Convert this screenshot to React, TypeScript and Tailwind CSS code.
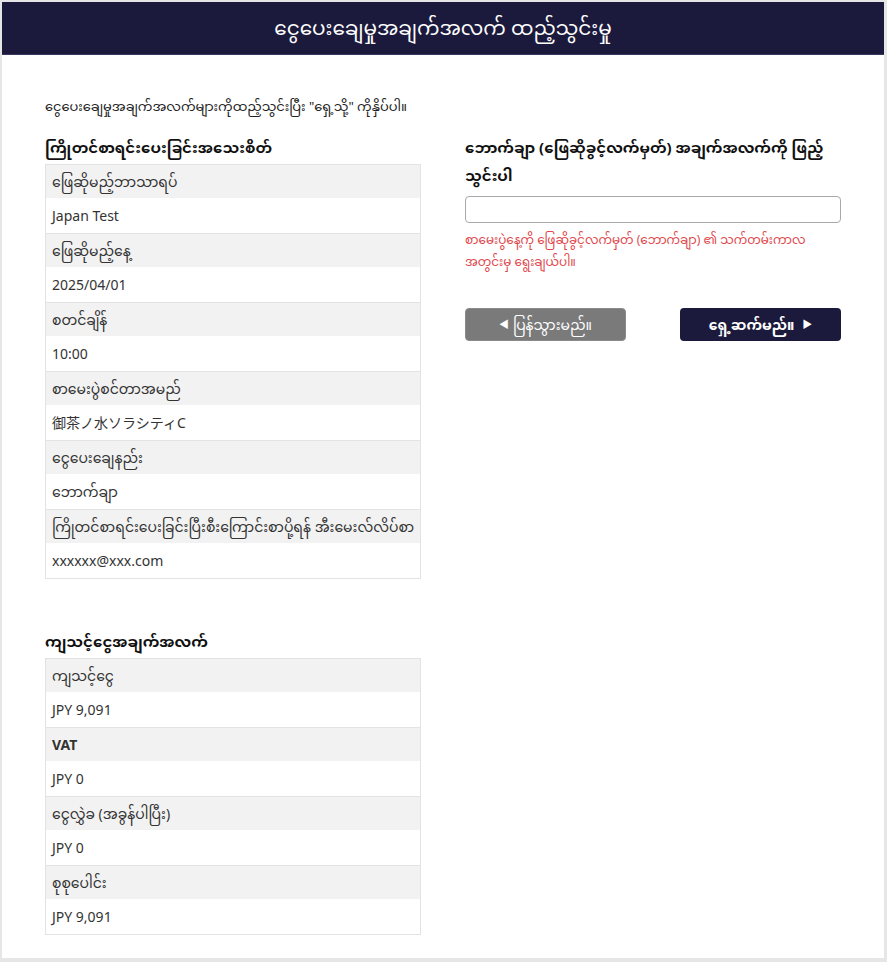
import React from 'react';

const font = { fontFamily: '"Noto Sans", "Noto Sans Myanmar", "Open Sans", "Noto Sans CJK JP", sans-serif' };

type Row = { label: string; value: string; boldLabel?: boolean };

const reservation: Row[] = [
  { label: 'ဖြေဆိုမည့်ဘာသာရပ်', value: 'Japan Test' },
  { label: 'ဖြေဆိုမည့်နေ့', value: '2025/04/01' },
  { label: 'စတင်ချိန်', value: '10:00' },
  { label: 'စာမေးပွဲစင်တာအမည်', value: '御茶ノ水ソラシティC' },
  { label: 'ငွေပေးချေနည်း', value: 'ဘောက်ချာ' },
  { label: 'ကြိုတင်စာရင်းပေးခြင်းပြီးစီးကြောင်းစာပို့ရန် အီးမေးလ်လိပ်စာ', value: 'xxxxxx@xxx.com' },
];

const fees: Row[] = [
  { label: 'ကျသင့်ငွေ', value: 'JPY 9,091' },
  { label: 'VAT', value: 'JPY 0', boldLabel: true },
  { label: 'ငွေလွှဲခ (အခွန်ပါပြီး)', value: 'JPY 0' },
  { label: 'စုစုပေါင်း', value: 'JPY 9,091' },
];

function InfoTable({ rows }: { rows: Row[] }) {
  return (
    <div className="border border-[#e3e3e3] text-[14px] text-[#333]">
      {rows.map((r, i) => (
        <div key={i} className={i > 0 ? 'border-t border-[#e3e3e3]' : ''}>
          <div className={`bg-[#f2f2f2] px-[6px] h-[33px] flex items-center whitespace-nowrap ${r.boldLabel ? 'font-bold' : ''}`}>
            {r.label}
          </div>
          <div className="bg-white px-[6px] h-[35px] flex items-center">{r.value}</div>
        </div>
      ))}
    </div>
  );
}

export default function App() {
  return (
    <div className="min-h-[962px] bg-[#e6e6e6] p-[2px] pr-[3px] pb-[4px]" style={font}>
      <div className="bg-white min-h-[956px]">
        {/* Header bar */}
        <div className="bg-[#1c1a3c] h-[53px] flex items-center justify-center border-b border-[#3a3860]">
          <h1 className="text-white text-[20px]">ငွေပေးချေမှုအချက်အလက် ထည့်သွင်းမှု</h1>
        </div>
        <div className="px-[43px] pt-[36px] pb-[22px]">
          <p className="text-[13px] text-[#222] h-[32px] flex items-center">
            ငွေပေးချေမှုအချက်အလက်များကိုထည့်သွင်းပြီး "ရှေ့သို့" ကိုနှိပ်ပါ။
          </p>
          <div className="flex gap-[44px] mt-[2px]">
            {/* Left: reservation + fee details */}
            <div className="w-[376px]">
              <h2 className="font-bold text-[15px] text-[#111] h-[34px] mt-[5px] flex items-center">ကြိုတင်စာရင်းပေးခြင်းအသေးစိတ်</h2>
              <InfoTable rows={reservation} />
              <h2 className="font-bold text-[15px] text-[#111] h-[34px] flex items-center mt-[45px]">ကျသင့်ငွေအချက်အလက်</h2>
              <InfoTable rows={fees} />
            </div>
            {/* Right: voucher input */}
            <div className="w-[376px]">
              <h2 className="font-bold text-[15px] text-[#111] leading-[28px] pt-[8px]">
                <span className="whitespace-nowrap">ဘောက်ချာ (ဖြေဆိုခွင့်လက်မှတ်) အချက်အလက်ကို ဖြည့်</span>
                <br />
                သွင်းပါ
              </h2>
              <input
                type="text"
                className="mt-[7px] w-full h-[27px] rounded-[4px] border border-[#a9a9a9] px-2 text-[14px] outline-none block"
              />
              <p className="mt-[6px] text-[12px] leading-[22px] text-[#e0474c]">
                စာမေးပွဲနေ့ကို ဖြေဆိုခွင့်လက်မှတ် (ဘောက်ချာ) ၏ သက်တမ်းကာလ
                <br />
                အတွင်းမှ ရွေးချယ်ပါ။
              </p>
              <div className="flex justify-between mt-[35px]">
                <button className="w-[161px] h-[33px] rounded-[4px] bg-[#7a7a7a] text-white text-[14px] flex items-center justify-center gap-1 border border-[#8a8a8a]">
                  <span className="text-[10px]">◀</span>
                  <span>ပြန်သွားမည်။</span>
                </button>
                <button className="w-[161px] h-[33px] rounded-[4px] bg-[#1c1a3c] text-white text-[14px] font-bold flex items-center justify-center gap-2">
                  <span>ရှေ့ဆက်မည်။</span>
                  <span className="text-[10px]">▶</span>
                </button>
              </div>
            </div>
          </div>
        </div>
      </div>
    </div>
  );
}
